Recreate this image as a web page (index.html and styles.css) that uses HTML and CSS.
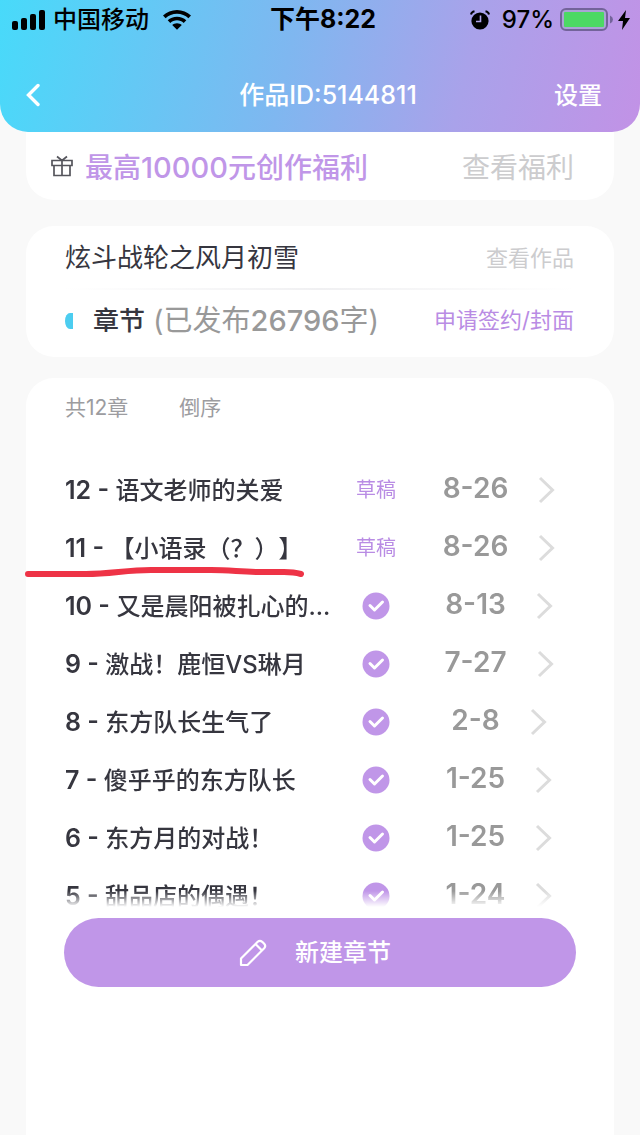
FILE: index.html
```html
<!DOCTYPE html>
<html lang="zh-CN">
<head>
	<meta charset="utf-8">
	<meta name="viewport" content="width=device-width, initial-scale=1">
	<title>作品ID:5144811</title>
	<link rel="stylesheet" href="styles.css">
</head>
<body>
	<header class="header">
		<div class="status">
			<div class="status-left">
				<svg width="34" height="20" viewBox="0 0 34 20"><rect x="0" y="11" width="6" height="9" rx="2"/><rect x="9" y="8" width="6" height="12" rx="2"/><rect x="18" y="4" width="6" height="16" rx="2"/><rect x="27" y="0" width="6" height="20" rx="2"/></svg>
				<span class="carrier">中国移动</span>
				<svg width="28" height="20" viewBox="0 0 28 20"><path d="M14 0C8.600 0 3.700 2.100 0 5.600L2.600 8.300C5.600 5.500 9.600 3.800 14 3.800S22.400 5.500 25.400 8.300L28 5.600C24.300 2.100 19.400 0 14 0zM14 6.700C10.400 6.700 7.200 8 4.700 10.300L7.300 12.900C9.100 11.300 11.400 10.300 14 10.300S18.900 11.300 20.700 12.900L23.300 10.300C20.800 8 17.600 6.700 14 6.700zM14 13.200C12.100 13.200 10.500 13.900 9.200 15L14 19.800L18.800 15C17.500 13.900 15.900 13.200 14 13.200z"/></svg>
			</div>
			<div class="time">下午8:22</div>
			<div class="status-right">
				<svg width="20" height="20" viewBox="0 0 20 20"><circle cx="10" cy="11" r="8.600"/><path d="M1 4.500Q1.500 1.800 4.500 1.200M15.500 1.200Q18.500 1.800 19 4.500" fill="none" stroke="#000" stroke-width="2"/><path d="M10.500 5.500V11.500H6" fill="none" stroke="#b0a4ea" stroke-width="1.600"/></svg>
				<span class="percent">97%</span>
				<svg width="54" height="24" viewBox="0 0 54 24"><rect x="1" y="1" width="46" height="21" rx="5" fill="#aaa3d6" stroke="#73639a" stroke-width="2"/><rect x="4" y="4" width="40" height="15" rx="1" fill="#4cd964"/><path d="M50 7.500Q53 9 53 11.500T50 15.500z" fill="#73639a"/></svg>
				<svg width="12" height="20" viewBox="0 0 12 20"><path d="M8 0L0 11H5L4 20L12 8H7z"/></svg>
			</div>
		</div>
		<nav class="nav">
			<button class="back" aria-label="返回"><svg width="14" height="24" viewBox="0 0 14 24"><path d="M12 2.500L2.500 12L12 21.500" fill="none" stroke="#fff" stroke-width="3.400" stroke-linecap="round"/></svg></button>
			<h1 class="title">作品ID:5144811</h1>
			<a class="settings" href="#">设置</a>
		</nav>
	</header>

	<section class="card welfare">
		<svg class="gift" width="22" height="22" viewBox="0 0 22 22"><path d="M1 5.500H21V10.500H1zM3 10.500V20.500H19V10.500M11 5.500V20.500M6 1.500L11 5.500L16 1.500" fill="none" stroke="#55555c" stroke-width="1.700"/></svg>
		<span class="welfare-text">最高<b class="amount">10000</b>元创作福利</span>
		<a class="welfare-link" href="#">查看福利</a>
	</section>

	<section class="card work">
		<div class="work-row work-head">
			<h2 class="work-name">炫斗战轮之风月初雪</h2>
			<a class="work-link" href="#">查看作品</a>
		</div>
		<div class="divider"></div>
		<div class="work-row">
			<span class="mark"></span>
			<h2 class="chapter">章节</h2>
			<span class="words">(已发布<b class="count">26796</b>字)</span>
			<a class="sign-link" href="#">申请签约/封面</a>
		</div>
	</section>

	<main class="card chapters">
		<div class="sort">
			<span>共12章</span>
			<button class="order">倒序</button>
		</div>
		<ul class="list"></ul>
		<button class="create">
			<svg width="28" height="28" viewBox="0 0 28 28"><path d="M2 26V19.500L18.700 2.800Q20.900 .8 23.200 2.800L25.200 4.800Q27.200 7.100 25.200 9.300L8.500 26zM16.500 5L23 11.500" fill="none" stroke="#fff" stroke-width="2.200" stroke-linejoin="round"/></svg>
			新建章节
		</button>
		<!-- red pen mark under chapter 11 -->
		<svg class="pen" width="280" height="12" viewBox="0 0 280 12"><path d="M2 6H60C85 6 100 2 125 2H185C205 2 215 4 235 4H258Q268 4 275 6" fill="none" stroke="#ee3346" stroke-width="6" stroke-linecap="round"/></svg>
	</main>

	<script src="script.js"></script>
</body>
</html>
```

FILE: styles.css
```css
* {
	box-sizing: border-box;
}

body {
	margin: 0;
	min-height: 100vh;
	display: flex;
	flex-direction: column;
	background: #f9f9f9;
	color: #36363f;
	font-family: Inter, "Noto Sans CJK SC", sans-serif;
	font-size: 24px;
	font-weight: 500;
	line-height: 1.25;
	text-spacing-trim: space-all;
}

a {
	color: inherit;
	text-decoration: none;
}

button {
	border: 0;
	padding: 0;
	background: none;
	color: inherit;
	font: inherit;
}

h1, h2 {
	margin: 0;
	font-weight: 500;
}

svg {
	display: block;
	flex: none;
}

/* header */
.header {
	height: 132px;
	border-radius: 0 0 28px 28px;
	background: linear-gradient(102deg, #48dafa 0%, #7fb7f0 45%, #a9a2ea 72%, #c292e6 100%);
}

.status {
	display: grid;
	grid-template-columns: 1fr auto 1fr;
	align-items: center;
	height: 40px;
	padding: 0 10px 0 12px;
	color: #000;
}

.status-left, .status-right {
	display: flex;
	align-items: center;
}

.status-right {
	justify-content: flex-end;
}

.carrier {
	margin: 0 14px 0 7px;
}

.time {
	padding-left: 4px;
	font-size: 25px;
	font-weight: 700;
}

.percent {
	margin: 0 6px 0 12px;
}

.status-right svg:last-child {
	margin-left: 4px;
}

.nav {
	display: flex;
	align-items: center;
	justify-content: space-between;
	height: 74px;
	margin-top: 18px;
	padding: 0 38px 0 26px;
	color: #fff;
}

.back {
	width: 76px;
}

.title, .settings {
	padding-top: 2px;
}

.title {
	font-size: 25px;
}

/* cards */
.card {
	margin: 0 26px;
	padding: 0 40px 0 39px;
	border-radius: 28px;
	background: #fff;
}

.welfare {
	display: flex;
	align-items: center;
	height: 68px;
	padding-left: 25px;
	border-radius: 0 0 28px 28px;
	font-size: 28px;
}

.welfare-text, .welfare-link {
	padding-top: 4px;
}

.welfare-text {
	margin-left: 12px;
	color: #c096e8;
}

.amount {
	font-size: 29px;
	font-weight: 500;
}

.welfare-link {
	margin-left: auto;
	color: #ccccce;
	font-weight: 400;
}

.work {
	height: 131px;
	margin-top: 26px;
}

.work-row {
	display: flex;
	align-items: center;
	height: 62px;
	font-size: 22px;
}

.work-head {
	padding-top: 3px;
}

.work-name, .chapter {
	font-size: 26px;
}

.work-name {
	font-weight: 400;
}

.work-link {
	margin-left: auto;
	color: #ccccce;
	font-weight: 400;
}

.divider {
	height: 2px;
	background: linear-gradient(90deg, #fff, #f0f0f2 50%, #fff);
}

.mark {
	width: 8px;
	height: 16px;
	border-radius: 5px 0 0 5px / 8px 0 0 8px;
	background: #4ccdf0;
}

.chapter {
	margin: 0 8px 0 20px;
}

.words {
	color: #999;
	font-size: 29px;
	font-weight: 400;
}

.count {
	font-weight: 500;
}

.sign-link {
	margin-left: auto;
	color: #b98ce4;
	font-weight: 400;
}

/* chapter list */
.chapters {
	flex: 1;
	position: relative;
	margin-top: 21px;
	padding: 0 38px;
	border-radius: 28px 28px 0 0;
}

.sort {
	display: flex;
	align-items: center;
	gap: 51px;
	height: 60px;
	margin-bottom: 23px;
	padding-left: 1px;
	color: #9c9ca0;
	font-size: 21px;
	font-weight: 400;
}

/* last row fades out above the button */
.list {
	margin: 0 0 -7px;
	padding: 0;
	list-style: none;
	-webkit-mask-image: linear-gradient(#000 430px, transparent 446px);
	mask-image: linear-gradient(#000 430px, transparent 446px);
}

.row {
	display: grid;
	grid-template-columns: minmax(0, 1fr) 76px 162px;
	align-items: center;
	height: 58px;
}

.name {
	padding: 2px 0 0 1px;
	white-space: nowrap;
}

.num {
	font-size: 25px;
	font-weight: 600;
}

.state {
	display: flex;
	justify-content: center;
	color: #b98ce4;
	font-size: 20px;
	font-weight: 400;
}

.date {
	display: flex;
	align-items: center;
	justify-content: center;
	gap: 30px;
	padding-left: 8px;
	color: #999;
	font-size: 28px;
	font-weight: 600;
}

.day {
	padding-bottom: 4px;
}

.create {
	display: flex;
	align-items: center;
	justify-content: center;
	gap: 28px;
	position: relative;
	width: 100%;
	height: 69px;
	padding-right: 10px;
	border-radius: 35px;
	background: #c096e8;
	color: #fff;
}

.pen {
	position: absolute;
	left: 0;
	top: 190px;
	overflow: visible;
}
```

FILE: script.js
```js
const chapters = [
	['12 -', '语文老师的关爱', true, '8-26'],
	['11 -', '【小语录（？）】', true, '8-26'],
	['10 -', '又是晨阳被扎心的...', false, '8-13'],
	['9 -', '激战！鹿恒VS琳月', false, '7-27'],
	['8 -', '东方队长生气了', false, '2-8'],
	['7 -', '傻乎乎的东方队长', false, '1-25'],
	['6 -', '东方月的对战！', false, '1-25'],
	['5 -', '甜品店的偶遇！', false, '1-24']
];

const check = '<svg width="28" height="28" viewBox="0 0 28 28"><circle cx="14" cy="14" r="13.500" fill="#c096e8"/><path d="M8 13.500L12.500 18L20.500 10" fill="none" stroke="#fff" stroke-width="3" stroke-linecap="round" stroke-linejoin="round"/></svg>';
const arrow = '<svg width="17" height="28" viewBox="0 0 17 28"><path d="M2 2L14.500 14L2 26" fill="none" stroke="#dcdcdc" stroke-width="3"/></svg>';

document.querySelector('.list').innerHTML = chapters.map(([num, name, draft, date]) => `
	<li><a class="row" href="#">
		<span class="name"><span class="num">${num}</span> ${name}</span>
		<span class="state">${draft ? '草稿' : check}</span>
		<span class="date"><span class="day">${date}</span>${arrow}</span>
	</a></li>`).join('');
```
